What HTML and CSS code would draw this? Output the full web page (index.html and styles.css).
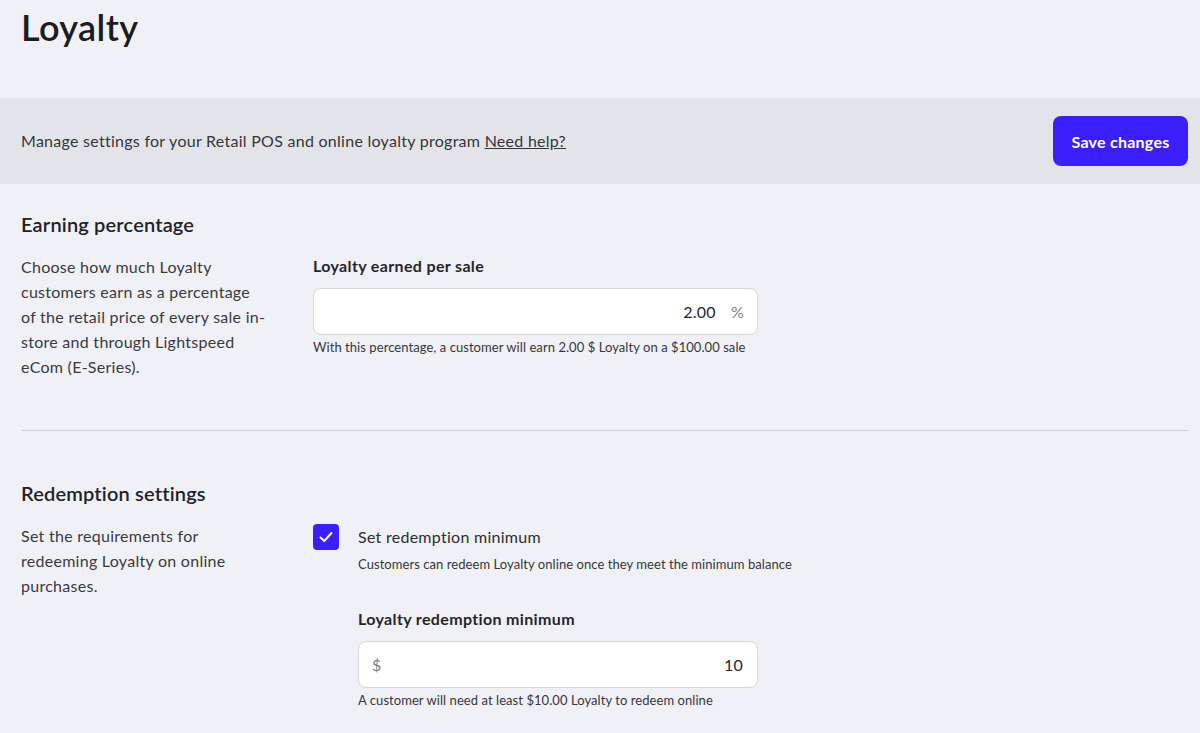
FILE: index.html
```html
<!DOCTYPE html>
<html lang="en">
<head>
<meta charset="utf-8">
<title>Loyalty</title>
<link rel="stylesheet" href="styles.css">
</head>
<body>
<div class="page">
  <h1 class="title">Loyalty</h1>
  <div class="banner">
    <p class="banner-text">Manage settings for your Retail POS and online loyalty program <a href="#" class="help">Need help?</a></p>
    <button class="save">Save changes</button>
  </div>

  <section class="section">
    <h2 class="section-title">Earning percentage</h2>
    <div class="row">
      <p class="desc">Choose how much Loyalty customers earn as a percentage of the retail price of every sale in-store and through Lightspeed eCom (E-Series).</p>
      <div class="field">
        <div class="label">Loyalty earned per sale</div>
        <div class="input input-wide">
          <span class="value grow">2.00</span>
          <span class="suffix">%</span>
        </div>
        <div class="hint">With this percentage, a customer will earn 2.00 $ Loyalty on a $100.00 sale</div>
      </div>
    </div>
  </section>

  <hr class="divider">

  <section class="section section-2">
    <h2 class="section-title">Redemption settings</h2>
    <div class="row">
      <p class="desc">Set the requirements for redeeming Loyalty on online purchases.</p>
      <div class="field">
        <div class="check-row">
          <span class="checkbox">
            <svg width="16" height="16" viewBox="0 0 16 16"><polyline points="2.5,8.5 6.3,12 13.5,4" fill="none" stroke="#fff" stroke-width="2" stroke-linecap="round" stroke-linejoin="round"/></svg>
          </span>
          <div class="check-text">
            <div class="check-label">Set redemption minimum</div>
            <div class="hint hint-tight">Customers can redeem Loyalty online once they meet the minimum balance</div>
            <div class="sub-field">
              <div class="label">Loyalty redemption minimum</div>
              <div class="input input-narrow">
                <span class="prefix">$</span>
                <span class="value grow right">10</span>
              </div>
              <div class="hint">A customer will need at least $10.00 Loyalty to redeem online</div>
            </div>
          </div>
        </div>
      </div>
    </div>
  </section>
</div>
</body>
</html>
```

FILE: styles.css
```css
* { box-sizing: border-box; }
html, body {
  margin: 0;
  padding: 0;
  background: #f0f1f6;
  font-family: Lato, "Noto Sans", "Liberation Sans", sans-serif;
  color: #2c2c31;
}
.page {
  padding: 0 12px 0 21px;
}
.title {
  margin: 6px 0 0;
  font-size: 36px;
  line-height: 43px;
  font-weight: 600;
  letter-spacing: 0.4px;
  color: #1c1c20;
}
.banner {
  margin: 49px -12px 0 -21px;
  padding: 0 12px 0 21px;
  height: 86px;
  background: #e3e4e9;
  display: flex;
  align-items: center;
  justify-content: space-between;
}
.banner-text {
  margin: 0;
  font-size: 16px;
  line-height: 24px;
  letter-spacing: 0.27px;
  color: #36363b;
}
.help {
  color: #36363b;
  text-decoration: underline;
}
.save {
  width: 135px;
  height: 50px;
  border: none;
  border-radius: 8px;
  background: #3a1ffc;
  color: #fff;
  font-family: Lato, "Noto Sans", sans-serif;
  font-size: 16px;
  font-weight: 700;
  letter-spacing: 0.25px;
  cursor: pointer;
}
.section {
  padding-top: 28px;
}
.section-2 {
  padding-top: 50px;
}
.section-title {
  margin: 0;
  font-size: 20px;
  line-height: 24px;
  font-weight: 600;
  letter-spacing: 0.17px;
  color: #222226;
}
.row {
  display: flex;
  gap: 47px;
  margin-top: 18px;
}
.desc {
  margin: 0;
  width: 245px;
  flex: none;
  font-size: 16px;
  line-height: 25px;
  letter-spacing: 0.27px;
  color: #3a3a3f;
}
.field {
  flex: 1;
}
.label {
  font-size: 16px;
  line-height: 24px;
  font-weight: 700;
  letter-spacing: 0.35px;
  color: #26262a;
}
.input {
  margin-top: 10px;
  height: 47px;
  background: #fff;
  border: 1px solid #d6d7dc;
  border-radius: 8px;
  display: flex;
  align-items: center;
  padding: 0 13px;
  font-size: 16px;
  letter-spacing: 0.27px;
  color: #26262a;
}
.input-wide { width: 445px; }
.input-narrow { width: 400px; }
.grow { flex: 1; text-align: right; }
.suffix {
  margin-left: 15px;
  color: #808086;
}
.prefix {
  color: #808086;
}
.value.right { padding-right: 1px; }
.hint {
  margin-top: 3px;
  font-size: 13px;
  line-height: 18px;
  letter-spacing: 0.06px;
  color: #36363b;
}
.hint-tight { margin-top: 6px; }
.check-row {
  display: flex;
  gap: 19px;
  margin-top: 1px;
}
.checkbox {
  flex: none;
  width: 26px;
  height: 26px;
  border-radius: 4px;
  background: #3a1ffc;
  display: flex;
  align-items: center;
  justify-content: center;
}
.check-text {
  flex: 1;
}
.check-label {
  font-size: 16px;
  line-height: 24px;
  padding-top: 1px;
  letter-spacing: 0.27px;
  color: #2c2c31;
}
.sub-field {
  margin-top: 34px;
}
.divider {
  margin: 51px 0 0;
  border: none;
  border-top: 1px solid #d0d1d6;
  height: 0;
}
```
